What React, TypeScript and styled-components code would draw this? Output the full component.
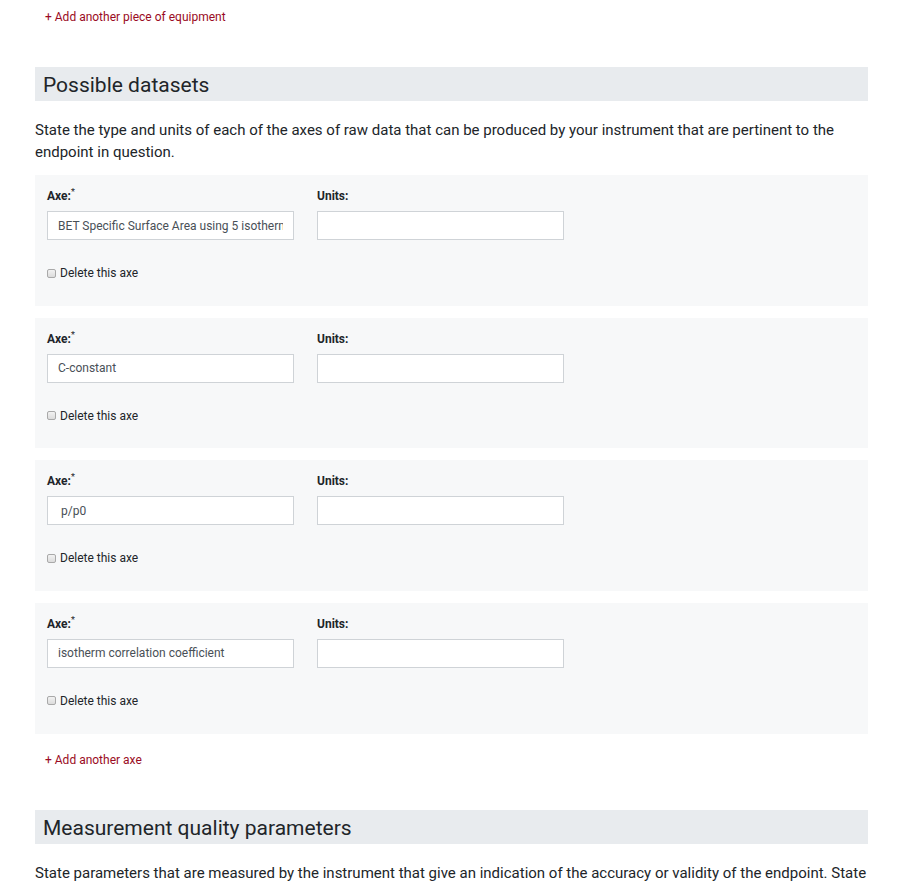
import styled, { createGlobalStyle } from "styled-components";

const GlobalStyle = createGlobalStyle`
  body {
    margin: 0;
    background: #fff;
    font-family: Roboto, "Liberation Sans", sans-serif;
    color: #212529;
  }
`;

const Page = styled.div`
  width: 833px;
  padding: 10px 0 0 35px;
`;

const AddLink = styled.a<{ $top?: number }>`
  display: block;
  margin-top: ${(p) => p.$top ?? 0}px;
  padding-left: 10px;
  font-size: 12px;
  line-height: 14px;
  color: #9a0b24;
  text-decoration: none;
  cursor: pointer;
`;

const SectionTitle = styled.h2<{ $top: number }>`
  margin: ${(p) => p.$top}px 0 0;
  height: 34px;
  padding-left: 8px;
  background: #e8ebee;
  font-size: 21px;
  font-weight: 400;
  line-height: 36px;
  color: #212529;
`;

const Intro = styled.p`
  margin: 18px 0 12px;
  font-size: 15px;
  line-height: 22px;
  color: #212529;
`;

const Panel = styled.div`
  height: 130.67px;
  box-sizing: border-box;
  margin-bottom: 12px;
  padding: 14px 12px 0;
  background: #f7f8f9;
`;

const Fields = styled.div`
  display: grid;
  grid-template-columns: 247px 247px;
  column-gap: 23px;
`;

const Field = styled.div`
  display: flex;
  flex-direction: column;
`;

const Label = styled.label`
  font-size: 12px;
  font-weight: 700;
  line-height: 14px;
  margin-bottom: 8px;
  sup {
    font-size: 9px;
    font-weight: 400;
    line-height: 0;
  }
`;

const Input = styled.input`
  box-sizing: border-box;
  height: 29px;
  width: 247px;
  padding: 0 10px;
  border: 1px solid #cfd3d7;
  background: #fff;
  font-family: Roboto, "Liberation Sans", sans-serif;
  font-size: 12px;
  color: #495057;
  outline: none;
`;

const DeleteRow = styled.label`
  display: flex;
  align-items: center;
  gap: 4px;
  margin-top: 26px;
  font-size: 12px;
  line-height: 14px;
  color: #212529;
`;

const Check = styled.input`
  appearance: none;
  box-sizing: border-box;
  margin: 0;
  width: 9px;
  height: 9px;
  border: 1px solid #a9a9a9;
  border-radius: 2px;
  background: linear-gradient(#f2f2f2, #dcdcdc);
`;

const axes = [
  "BET Specific Surface Area using 5 isotherm points",
  "C-constant",
  " p/p0",
  "isotherm correlation coefficient",
];

export default function App() {
  return (
    <>
      <GlobalStyle />
      <Page>
        <AddLink>+ Add another piece of equipment</AddLink>
        <SectionTitle $top={43}>Possible datasets</SectionTitle>
        <Intro>
          State the type and units of each of the axes of raw data that can be
          produced by your instrument that are pertinent to the endpoint in
          question.
        </Intro>
        {axes.map((axe, i) => (
          <Panel key={i}>
            <Fields>
              <Field>
                <Label>
                  Axe:<sup>*</sup>
                </Label>
                <Input defaultValue={axe} />
              </Field>
              <Field>
                <Label>Units:</Label>
                <Input defaultValue="" />
              </Field>
            </Fields>
            <DeleteRow>
              <Check type="checkbox" />
              Delete this axe
            </DeleteRow>
          </Panel>
        ))}
        <AddLink $top={19}>+ Add another axe</AddLink>
        <SectionTitle $top={43}>Measurement quality parameters</SectionTitle>
        <Intro>
          State parameters that are measured by the instrument that give an
          indication of the accuracy or validity of the endpoint. State
          parameters and their units.
        </Intro>
      </Page>
    </>
  );
}
